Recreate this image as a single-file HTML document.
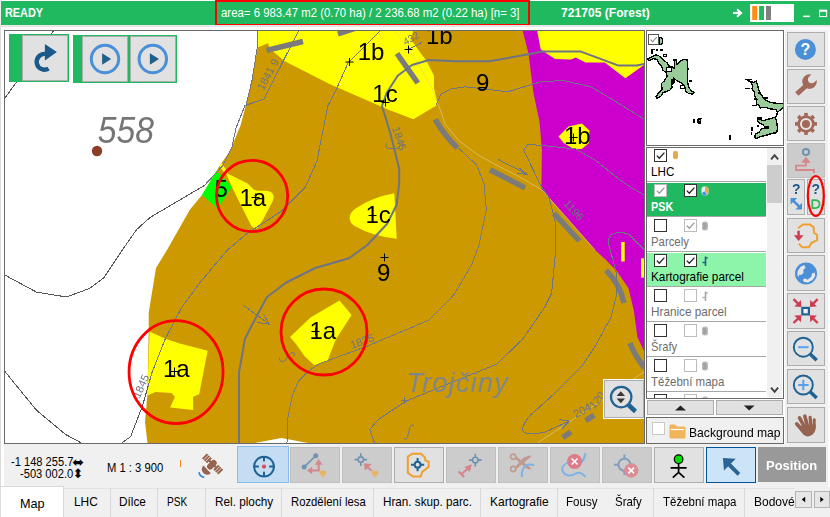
<!DOCTYPE html>
<html><head><meta charset="utf-8"><title>Forest map</title>
<style>
*{box-sizing:border-box;margin:0;padding:0}
html,body{width:830px;height:517px;overflow:hidden;background:#f0f0f0}
body{position:relative;font-family:"Liberation Sans",sans-serif;font-size:13px;color:#000}
.a{position:absolute}
.t{position:absolute;white-space:nowrap;line-height:1;transform-origin:0 0}
#title{left:1px;top:1px;width:829px;height:24px;background:#21b95f}
.w{color:#fff}
.b{font-weight:bold}
.btn{position:absolute;background:#e1e1e1;border:1px solid #adadad}
.btn.dis{background:#cccccc;border-color:#bfbfbf}
.btn.act1{background:#c5ddf2;border-color:#86bcee}
.btn.act2{background:#cce4f7;border:1.5px solid #005499}
.btn svg{position:absolute;left:0;top:0}
.cb{position:absolute;width:13px;height:13px;background:#fff;border:1px solid #333}
.cb.l{border-color:#bcbcbc}
.cb svg{position:absolute;left:0;top:0}
.sep{position:absolute;left:647px;width:119px;height:1px;background:#a0a0a0}
.tab{position:absolute;top:488px;height:29px;border-left:1px solid #d9d9d9}
</style>
<style>
#tready{transform:scaleX(0.9068);margin-left:-0.2px}
#tarea{transform:scaleX(0.9120);margin-left:-0.2px}
#tforest{transform:scaleX(0.9682);margin-left:-0.2px}
#ly0{transform:scaleX(0.8956);margin-left:-0.2px}
#ly1{transform:scaleX(0.8341);margin-left:-0.2px}
#ly2{transform:scaleX(0.8741);margin-left:-0.2px}
#ly3{transform:scaleX(0.9052);margin-left:-0.2px}
#ly4{transform:scaleX(0.9030);margin-left:-0.2px}
#ly5{transform:scaleX(0.8601);margin-left:-0.2px}
#ly6{transform:scaleX(0.8820);margin-left:-0.2px}
#bgmap{transform:scaleX(0.9320);margin-left:-0.2px}
#co1{transform:scaleX(0.8888);margin-left:-0.2px}
#co2{transform:scaleX(0.8899);margin-left:-0.2px}
#scale{transform:scaleX(0.8985);margin-left:-0.2px}
#pos{transform:scaleX(0.9965);margin-left:-0.2px}
#tb0{transform:scaleX(0.9725);margin-left:-0.2px}
#tb1{transform:scaleX(0.9148);margin-left:-0.2px}
#tb2{transform:scaleX(0.9080);margin-left:-0.2px}
#tb3{transform:scaleX(0.7803);margin-left:-0.2px}
#tb4{transform:scaleX(0.9050);margin-left:-0.2px}
#tb5{transform:scaleX(0.8686);margin-left:-0.2px}
#tb6{transform:scaleX(0.8980);margin-left:-0.2px}
#tb7{transform:scaleX(0.9230);margin-left:-0.2px}
#tb8{transform:scaleX(0.8897);margin-left:-0.2px}
#tb9{transform:scaleX(0.8832);margin-left:-0.2px}
#tb10{transform:scaleX(0.8844);margin-left:-0.2px}
#tb11{transform:scaleX(0.9208);margin-left:-0.2px}
</style>
</head><body>
<div class="a" style="left:0;top:0;width:830px;height:1px;background:#fff"></div>
<div id="title" class="a"></div>
<div class="t w b" id="tready" style="left:5px;top:7px;font-size:12px">READY</div>
<div class="t w" id="tarea" style="left:221px;top:7px;font-size:12.5px">area= 6 983.47 m2 (0.70 ha) / 2 236.68 m2 (0.22 ha) [n= 3]</div>
<div class="a" style="left:215px;top:0;width:314.6px;height:25.8px;border:2.8px solid #f00"></div>
<div class="t w b" id="tforest" style="left:561.3px;top:7px;font-size:12.5px">721705 (Forest)</div>
<svg class="a" style="left:728px;top:1px" width="102" height="24" viewBox="728 1 102 24">
<path d="M733,13 H740" stroke="#fff" stroke-width="2.1" fill="none"/><path d="M737,9.3 L741,13 L737,16.7" stroke="#fff" stroke-width="2.1" fill="none"/>
<rect x="750" y="4" width="44" height="18" fill="#fff"/>
<rect x="752.2" y="6" width="4.9" height="14" fill="#ff8c14"/>
<rect x="759.1" y="6" width="4.9" height="14" fill="#21b95f"/>
<rect x="766" y="6" width="5" height="14" fill="#808080"/>
<rect x="803.2" y="15.6" width="6.7" height="1.5" fill="#fff"/>
<rect x="819.6" y="10.6" width="7" height="6" fill="none" stroke="#fff" stroke-width="1"/><rect x="819.1" y="9.6" width="8" height="2.2" fill="#fff"/>
</svg>

<div class="a" style="left:0;top:25px;width:830px;height:1.5px;background:#e8e6e7"></div>
<div class="a" style="left:1px;top:26.5px;width:784px;height:417.5px;background:#fff"></div>
<div class="a" style="left:785px;top:26.5px;width:45px;height:3.5px;background:#fff"></div>
<div class="a" style="left:828px;top:26.5px;width:2px;height:460px;background:#fbfbfb"></div>
<div class="a" style="left:0;top:26.5px;width:1px;height:491px;background:#dcdcdc"></div>
<!-- MAP FRAME -->
<div class="a" style="left:4px;top:30px;width:641px;height:414px;border:1px solid #696969;background:#fff"></div>
<svg class="a" id="map" style="left:5px;top:31px" width="639" height="412" viewBox="5 31 639 412" font-family="Liberation Sans, sans-serif">
<g shape-rendering="auto">
<!-- brown -->
<polygon fill="#cc9900" points="257.3,30 644,30 644,443 308,443 281.4,438 254.8,443 147.5,443 145,422 147.3,396 148.7,332 148.7,312.7 156,268 167,250 190,209.6 202,195 216.5,171 220,165 229.8,151.6 240.7,125 246,104.8 252,80.6 257.5,48"/>
<!-- yellow top-left -->
<polygon fill="#ffff00" points="257.3,30 413.4,30 411,39.5 419.5,51.6 426.7,61.3 434,75.8 434,87.9 437.6,104.8 413.4,119.3 388,109.6 330,84.3 284.8,61.3 270,49 268,43.3 257.5,47.5"/>
<!-- magenta -->
<polygon fill="#cc00cc" points="522.5,30 528.6,54 533.4,92.7 539.5,121.7 541.9,150 541.4,189 595,250 606,260 617.5,272 628.5,288.5 633.8,310.3 637.4,337 644.2,351.4 644.2,30"/>
<!-- yellow top-right -->
<polygon fill="#ffff00" points="537,30 540.7,49.2 545.5,52.8 555.2,58.9 571,59.6 575.8,57.6 585.4,62.5 604.8,62.5 625.3,78.2 644.2,64.9 644.2,30"/>
<!-- yellow 1b blob -->
<polygon fill="#ffff00" points="558.5,136.5 568.5,126.5 581.8,123.5 589.5,130.5 589,143 581.8,149 573.3,148.7 563.7,143"/>
<rect fill="#ffff00" x="621.2" y="242" width="3.5" height="19.5"/>
<rect fill="#ffff00" x="641" y="258.3" width="3.2" height="19.3"/>
<!-- green -->
<polygon fill="#00ff00" points="216.5,171 232.2,186.7 217.7,208.4 202,195"/>
<polygon fill="#ffff00" points="219,165.5 221.5,163 228,172.5 225.5,174.5"/>
<!-- yellow 1a c1 -->
<path fill="#ffff00" d="M225.9,172.7 L247.6,183.5 L253.5,189.2 Q256,190.8 259,190.8 L267,190.8 Q271.5,191.3 273,194.5 Q274.5,197.5 272.5,201.5 L262.7,220.2 L256.4,229 L251.6,226.6 L232,187.2 Z"/>
<!-- yellow 1c mid -->
<path fill="#ffff00" d="M349.6,218 Q350,212 355.6,208.4 Q372.6,197 394.3,193.2 L396.7,238.7 Q372.6,236.5 355.6,226.6 Q349.5,223 349.6,218 Z"/>
<!-- yellow 1a c2 -->
<polygon fill="#ffff00" points="149.6,331.4 165.3,338.7 179.8,343.5 207.6,350.8 199.2,394.3 193.1,396.7 193.1,410 170.1,407.6 175,396.7 171.3,393 155.6,391.9 147.2,395.5"/>
<!-- yellow 1a c3 -->
<polygon fill="#ffff00" points="290,337 310.5,317.5 339.5,300.6 351.6,315 335.9,339.3 327.4,361 314,365 304.4,356 296,344"/>
</g>
<!-- light lines -->
<g fill="none" stroke="#dcc680" stroke-width="0.9" opacity="0.85">
<polyline points="394,30 419,65 432,88 438.4,104.7" opacity="0.5"/><polyline points="438.4,104.7 445.1,124 458.7,140.5 478,155 497.4,165.6 516.7,175.3 541.9,189.8 595,250"/>
<polyline points="537.8,442.8 600,401.7 644,372"/>
</g>
<!-- thick dashes -->
<g fill="none" stroke="#7b7b7b" stroke-width="5.5">
<path d="M266.6,50.3 L303,41.5"/>
<path d="M338,34 L356,28"/>
<path d="M397,53.5 L417.8,83"/>
<path d="M435.2,119.3 Q444,135 457.5,148"/>
<path d="M490,169.7 L525,187.9"/>
<path d="M554,213.3 L579.4,241"/>
<path d="M606,270.4 Q620,284 624,303"/>
<path d="M630,343 Q634,354 644.5,368"/>
<path d="M562.7,437.5 L571,432"/>
<path d="M585.7,420.6 L594,415.1"/>
</g>
<!-- 2px gray lines -->
<g fill="none" stroke="#6e7486" stroke-width="2" stroke-linejoin="round">
<polyline points="644.5,64 636.7,65.6 618.7,65.6 581,51.6 541.9,51.6 529.8,54 489.6,61.3 455.8,61.3 429,60 412,65 397.7,75.8 386.8,92.7 382,106 390.5,133.8 399.2,168.5 399.2,183 396.7,204.8 387,224 367.3,245 349,258.3 315.3,268 286.3,282.5 267,297 250.9,327 245,338.7 239,372.6 239,443"/>
</g>
<!-- thin lines -->
<g fill="none" stroke="#707585" stroke-width="1" shape-rendering="crispEdges">
<polyline points="299,30 264,99 245,105.6 236,128 232,146.8 222.5,166 204.4,185.5 150,217.5 136.6,229.6 125.8,245 104,277.6 89.5,288.5 66.5,297 36.3,292 4.8,275"/>
<polyline points="381,30 348,63 337,87.9 328,105.6 324,125 316.9,161.3 304.8,187.9 281.8,210.9 246.7,233.8 227.4,250 200,282.5 181.4,307.9 165.3,338.7 152,372.6 142.7,405.3 130.6,436.7 122,442.8"/>
<polyline stroke="#7a7a7a" points="458.5,148 476.6,165 483.9,183 486.3,209.6 479,245 471.8,264.3 454.8,293.4 450,299 429,320 366,346.6 320,363.5 308,371.4 298.4,381 292.3,395.6 287.5,419.8 287,442.8"/>
<polyline points="644.2,119.3 608,96.8 591,86.8 563.5,80.5 540.8,81.7 508,91.8 465.4,86.8 451,89 441,94 436.4,104.8"/>
<polyline points="644,195 624,183 595,160 575.8,149 541.9,145.5 527.4,144.3 523.8,150.4 540.7,185.5 549,197.5 555.2,221.7 555.7,250 551.6,293.4 544.3,307.9 522.5,339.3 496.7,364.2 460.5,378.7 404.8,401.7 378,419.8 369.7,429.5 374.5,442.8"/>
<path d="M644.3,250 L628.7,234.2 Q620,231 613,233.8 Q607.3,237 608.4,243.5 L613,260.1 L616.4,274 L616.9,293.4 L610.8,317.5 L595,346.6 L581.4,366.6 L554.8,393.2 L530.6,415 Q521,426 523,431 Q527,436.5 545,432 L569.3,421"/>
<polyline points="559,419.5 569.3,421 562,428.5"/>
<polyline points="4.8,371.4 36.3,410 65.3,434.3 81,442.8"/>
<polyline points="54,30 5,98"/>
<polyline points="408.6,49.3 421.6,42.5"/>
<polyline points="498.3,159.4 527.4,174.5"/>
<polyline points="518.6,167.5 527.4,174.5 516.7,173.3"/>
<polyline points="242.7,304.8 269.3,324.2"/>
<polyline points="263.5,314 269.3,324.2 257.5,322.5"/>
</g>
<g fill="none" stroke="#555" stroke-width="1" shape-rendering="crispEdges">
<polyline points="204.4,185.5 150,217.5 136.6,229.6 125.8,245 104,277.6 89.5,288.5 66.5,297 36.3,292 4.8,275"/>
<polyline points="148,386 142.7,405.3 130.6,436.7 122,442.8"/>
<polyline points="4.8,371.4 36.3,410 65.3,434.3 81,442.8"/>
<polyline points="54,30 5,98"/>
</g>
<g fill="none" stroke="#777" stroke-width="1" shape-rendering="crispEdges"><polyline points="257.8,30 257.5,46 252,80.6 246,104.8"/></g>
<!-- brown dot -->
<circle cx="97" cy="151" r="5.2" fill="#8b3d26"/>
<!-- small rotated labels -->
<g fill="#6e7486" font-size="11">
<text transform="translate(263.5,91) rotate(-62)">1841 9</text>
<text transform="translate(405.5,45.5) rotate(-30)" font-size="10">432</text>
<text transform="translate(392,128) rotate(72)">1845</text>
<text transform="translate(563,204) rotate(48)">1196</text>
<text transform="translate(352,349) rotate(-20)">1835</text>
<text transform="translate(139.5,399) rotate(-66)">1845</text>
<text transform="translate(576,418) rotate(-28)">204</text>
<text transform="translate(594,409.5) rotate(-50)">120</text>

</g>
<path d="M404,438.5 q2,1.8 3.4,-1 l2.6,-10.5 q1.2,-3 4,-1.6" fill="none" stroke="#6d7684" stroke-width="1"/>
<path d="M279.3,358.2 Q279.3,361.5 282.5,361.8 Q285,361.5 287,357.5 L289.5,354.3 Q291.5,351.8 293.8,352.8 Q295.3,354.5 293.7,356.5" fill="none" stroke="#6e7486" stroke-width="1"/>
<path d="M386.6,143.4 Q384.6,147.3 388,148.3 L396,148.7 Q399,148.5 400,146 Q401,143.2 403,144 Q404.2,145.5 402.8,147.2" fill="none" stroke="#6e7486" stroke-width="1"/>
<!-- big gray labels -->
<text transform="translate(97.7,143) scale(0.937,1)" font-size="36" font-style="italic" fill="#757575">558</text>
<text id="troj" x="406.5" y="392" font-size="27" font-style="italic" fill="#7f868e" letter-spacing="1.25">Trojčiny</text>
<!-- plus marks -->
<g stroke="#000" stroke-width="1" fill="none">
<path d="M345.5,62h8M349.5,58v8"/>
<path d="M381.5,102.5h8M385.5,98.5v8"/>
<path d="M404.5,49.5h8M408.5,45.5v8"/>
<path d="M251.5,197.5h8M255.5,193.5v8"/>
<path d="M368.5,215.5h8M372.5,211.5v8"/>
<path d="M380.5,257.5h8M384.5,253.5v8"/>
<path d="M170.5,371.5h8M174.5,367.5v8"/>
<path d="M311.5,331.5h8M315.5,327.5v8"/>
<path d="M569.5,137.5h8M573.5,133.5v8"/>
<path d="M479,87.5h8"/>
</g>
<g stroke="#6d7684" stroke-width="1" fill="none"><path d="M401,400.5h7M404.5,397v7"/></g>
<!-- black labels -->
<g fill="#000" font-size="24">
<text x="357.7" y="60">1b</text>
<text x="426" y="44">1b</text>
<text x="372.3" y="102">1c</text>
<text x="476" y="91">9</text>
<text x="564" y="143.5">1b</text>
<text x="214.5" y="197.3">5</text>
<text x="239.5" y="205.8">1a</text>
<text x="365.5" y="223">1c</text>
<text x="377" y="281.3">9</text>
<text x="163" y="377.4">1a</text>
<text x="309.5" y="338.5">1a</text>
</g>
<!-- red circles -->
<g fill="none" stroke="#ff0000" stroke-width="2.8">
<circle cx="252.1" cy="196" r="35.6"/>
<ellipse cx="176.05" cy="372.1" rx="47" ry="51.4"/>
<circle cx="324" cy="332" r="43"/>
</g>

</svg>
<!-- MAP OVERLAY BUTTONS -->
<div class="a" style="left:9px;top:34px;width:60px;height:48px;background:#21b95f"></div>
<div class="btn" style="left:22px;top:35px;width:46px;height:46px">
<svg width="44" height="44" viewBox="23 36 44 44"><path d="M48.6,68.6 A7.9,7.9 0 1 1 45,53.9" fill="none" stroke="#1a5a8a" stroke-width="4.4"/><polygon points="44.9,44.1 56.9,52 44.9,60.6" fill="#1a5a8a"/></svg></div>
<div class="a" style="left:73px;top:35px;width:104px;height:48px;background:#21b95f"></div>
<div class="btn" style="left:82px;top:36px;width:46px;height:46px">
<svg width="44" height="44" viewBox="83 37 44 44"><circle cx="105" cy="59" r="13.7" fill="none" stroke="#4a90d9" stroke-width="3"/><polygon points="102.1,53.2 111.2,58.9 102.1,64.8" fill="#1f5f8b"/></svg></div>
<div class="btn" style="left:130px;top:36px;width:46px;height:46px">
<svg width="44" height="44" viewBox="131 37 44 44"><circle cx="152.8" cy="59" r="13.7" fill="none" stroke="#4a90d9" stroke-width="3"/><polygon points="149.9,53.2 159,58.9 149.9,64.8" fill="#1f5f8b"/></svg></div>
<div class="a" style="left:603px;top:379px;width:41px;height:40px;background:#fff"></div>
<div class="btn" style="left:604px;top:380px;width:39.5px;height:38px">
<svg width="38" height="36" viewBox="605 381 38 36"><circle cx="621.2" cy="397.1" r="10.2" fill="none" stroke="#1f6394" stroke-width="2.2"/><path d="M628.6,405 L635.5,411.5" stroke="#1f6394" stroke-width="4.5" fill="none"/><polygon points="616.6,395.9 620.8,391.2 625,395.9" fill="#383838"/><polygon points="616.6,398.5 625,398.5 620.8,403.2" fill="#383838"/></svg></div>

<!-- MINIMAP -->
<div class="a" style="left:646px;top:30px;width:138px;height:116px;border:1px solid #696969;background:#fff"></div>
<svg class="a" style="left:647px;top:31px" width="136" height="114" viewBox="647 31 136 114" shape-rendering="crispEdges">
<g fill="#99cc99" stroke="#000" stroke-width="1.3" stroke-linejoin="miter">
<polygon points="647.2,59.3 651.6,56.9 656,54.9 658.8,55.8 661.5,58 664.8,61 667.6,63.2 668.7,65.9 672.6,66.5 673.9,68.7 674.8,65.4 673.9,59.3 675.9,59.3 677,64.3 680.3,61.5 683,59.3 686.9,59.3 687.4,63.2 688,68.7 687.4,74.8 687.4,81.4 688.6,86.9 691.3,90.8 694.1,92.4 692.4,94.1 688.6,93.5 685.8,91.3 685.2,87.4 681.4,83 676.4,80.3 673.9,78.1 671.5,83.6 672,87.4 669.8,90.2 665.9,91.9 662.6,92.4 661.5,95.7 657.1,98.5 656,96.8 658.8,92.4 662.1,89.1 661.5,83.6 664.8,80.3 667.1,75.9 665.9,72.6 662.6,69.8 661.5,65.9 658.8,63.2 657.1,59.3 653.3,58.8 649.4,60.4"/>
<polygon points="659,37.8 661.5,37.6 662.9,40 662.2,43.5 660,45 659,43"/>
<polygon points="745.6,79.1 753.4,82.6 756.2,81.2 757.6,84.7 758.3,88.9 761.1,94.6 764.7,99.5 770.3,102.4 777.4,103.4 783.5,103.8 783.5,107.3 780.2,110.1 777.4,112.3 776,109.4 770.3,109 765.4,107.3 760.4,108 759,105.2 756.2,103.8 756.9,99.5 754.8,96 754.1,91.8 751.9,88.9 752.7,85.4 750.5,81.9"/>
<polygon points="757.6,117.9 763.2,120.7 770.3,118.6 775.3,117.2 776.7,121.4 777.4,128.5 776.7,132.7 771.7,133.4 767.5,134.9 761.8,136.3 756.2,138.4 754.8,136.3 756.2,133.4 759,132.7 761.1,129.2 765.4,127.8 763.2,125 760.4,123.6 757.6,121.4"/>
</g>
<g fill="#fff" stroke="#000" stroke-width="1">
<rect x="666.5" y="67.5" width="5" height="4"/>
<rect x="680.5" y="85.5" width="4" height="3"/>
<rect x="663.5" y="54.5" width="3" height="2"/>
</g>
<g fill="#000">
<rect x="651" y="48.5" width="2" height="5"/><rect x="653" y="48.5" width="2" height="1.5"/><rect x="655.5" y="49" width="2.2" height="1.5"/><rect x="660.4" y="49" width="2.2" height="1.5"/>
<rect x="689" y="80" width="3" height="1.6"/>
<polygon points="671.5,79 674,78 675.5,82 672,85 671,83"/>
<rect x="692.9" y="119" width="2" height="4"/><polygon points="698,118 702,118 701,120 700.5,124 698,124 697,121"/>
<rect x="729" y="135" width="2.2" height="5"/>
<rect x="745" y="87.8" width="5" height="1"/><rect x="752" y="104.8" width="5" height="1.2"/><rect x="763.2" y="96.7" width="4.3" height="2"/><rect x="745.6" y="78.5" width="6" height="1.5"/>
<path d="M777.4,112.3 L776,117.2" stroke="#000" stroke-width="1.5"/>
<rect x="757" y="117" width="4.5" height="3"/><rect x="763.5" y="125.8" width="5.5" height="3"/>
<rect x="750.5" y="127" width="2.2" height="4"/><rect x="750.5" y="132" width="1.5" height="3"/><rect x="757" y="125" width="1.5" height="1.5"/><rect x="753.5" y="136" width="1.5" height="1.5"/>
<rect x="758" y="92" width="1.5" height="1.5"/><rect x="754" y="98" width="1.5" height="1.5"/>
</g>
<rect x="699" y="120" width="1" height="1" fill="#99cc99"/>
</svg>
<div class="a" style="left:648px;top:34px;width:11px;height:11px;background:#fff;border:1px solid #555"><svg class="a" style="left:0;top:0" width="9" height="9" viewBox="0 0 9 9"><path d="M1.5,4.6 L3.6,6.8 L7.8,2" fill="none" stroke="#888" stroke-width="1.1"/></svg></div>

<!-- LAYER LIST -->
<div class="a" style="left:646px;top:147px;width:138px;height:252px;border:1px solid #696969;background:#fff"></div>
<div class="a" id="list" style="left:647px;top:149px;width:136px;height:249px;overflow:hidden">
<div class="cb" style="left:7px;top:0px"><svg width="11" height="11" viewBox="0 0 11 11"><path d="M1.8,5.6 L4.3,8.2 L9.4,2.6" fill="none" stroke="#222" stroke-width="1.3"/></svg></div>
<div class="a" style="left:26px;top:2px;width:5px;height:8px;border-radius:2px;background:#e8a84c"></div>
<div class="t" id="ly0" style="left:4.5px;top:16px;font-size:13px;color:#000">LHC</div>
<div class="a" style="left:0;top:32px;width:119px;height:1px;background:#a6a6a6"></div>
<div class="a" style="left:0;top:34px;width:119px;height:33.4px;background:#21b95f"></div>
<div class="cb l" style="left:7px;top:35px"><svg width="11" height="11" viewBox="0 0 11 11"><path d="M1.8,5.6 L4.3,8.2 L9.4,2.6" fill="none" stroke="#9a9a9a" stroke-width="1.3"/></svg></div>
<div class="cb" style="left:37px;top:35px"><svg width="11" height="11" viewBox="0 0 11 11"><path d="M1.8,5.6 L4.3,8.2 L9.4,2.6" fill="none" stroke="#222" stroke-width="1.3"/></svg></div>
<svg class="a" style="left:54px;top:37px" width="8" height="10" viewBox="0 0 8 10"><rect x="0.5" y="0.5" width="7" height="9" rx="3" fill="#e9f1f6"/><path d="M4,0.5 h0.5 a3,3 0 0 1 3,3 v3 a3,3 0 0 1 -1,2.2 L4,5 Z" fill="#e8a84c"/><path d="M0.8,7 L3.5,5.2 L6,8.6 Q4,10 2,9 Z" fill="#4a90d9"/></svg>
<div class="t b" id="ly1" style="left:4.5px;top:51px;font-size:13px;color:#fff">PSK</div>
<div class="a" style="left:0;top:67px;width:119px;height:1px;background:#a6a6a6"></div>
<div class="cb" style="left:7px;top:70px"></div>
<div class="cb l" style="left:37px;top:70px"><svg width="11" height="11" viewBox="0 0 11 11"><path d="M1.8,5.6 L4.3,8.2 L9.4,2.6" fill="none" stroke="#9a9a9a" stroke-width="1.3"/></svg></div>
<svg class="a" style="left:54px;top:72px" width="8" height="10" viewBox="0 0 8 10"><rect x="1" y="0.5" width="6" height="9" rx="2.5" fill="#b9b9b9"/><path d="M2,3 h3 M2.5,5 h3 M2,7 h3" stroke="#8a8a8a" stroke-width="1"/></svg>
<div class="t" id="ly2" style="left:4.5px;top:86px;font-size:13px;color:#6d6d6d">Parcely</div>
<div class="a" style="left:0;top:102px;width:119px;height:1px;background:#a6a6a6"></div>
<div class="a" style="left:0;top:104px;width:119px;height:33.4px;background:#8df5aa"></div>
<div class="cb" style="left:7px;top:105px"><svg width="11" height="11" viewBox="0 0 11 11"><path d="M1.8,5.6 L4.3,8.2 L9.4,2.6" fill="none" stroke="#222" stroke-width="1.3"/></svg></div>
<div class="cb" style="left:37px;top:105px"><svg width="11" height="11" viewBox="0 0 11 11"><path d="M1.8,5.6 L4.3,8.2 L9.4,2.6" fill="none" stroke="#222" stroke-width="1.3"/></svg></div>
<svg class="a" style="left:54px;top:107px" width="8" height="11" viewBox="0 0 8 11"><path d="M4.5,0.5 v9.5 M4.5,2 h2.2 M1.5,6.5 h3" stroke="#1f5f8b" stroke-width="1.6" fill="none"/></svg>
<div class="t" id="ly3" style="left:4.5px;top:121px;font-size:13px;color:#000">Kartografie parcel</div>
<div class="a" style="left:0;top:137px;width:119px;height:1px;background:#a6a6a6"></div>
<div class="cb" style="left:7px;top:140px"></div>
<div class="cb l" style="left:37px;top:140px"></div>
<svg class="a" style="left:54px;top:142px" width="8" height="11" viewBox="0 0 8 11"><path d="M4.5,0.5 v9.5 M4.5,2 h2.2 M1.5,6.5 h3" stroke="#a9a9a9" stroke-width="1.6" fill="none"/></svg>
<div class="t" id="ly4" style="left:4.5px;top:156px;font-size:13px;color:#6d6d6d">Hranice parcel</div>
<div class="a" style="left:0;top:172px;width:119px;height:1px;background:#a6a6a6"></div>
<div class="cb" style="left:7px;top:175px"></div>
<div class="cb l" style="left:37px;top:175px"></div>
<svg class="a" style="left:54px;top:177px" width="8" height="10" viewBox="0 0 8 10"><rect x="1" y="0.5" width="6" height="9" rx="2.5" fill="#b9b9b9"/><path d="M2,3 h3 M2.5,5 h3 M2,7 h3" stroke="#8a8a8a" stroke-width="1"/></svg>
<div class="t" id="ly5" style="left:4.5px;top:191px;font-size:13px;color:#6d6d6d">Šrafy</div>
<div class="a" style="left:0;top:207px;width:119px;height:1px;background:#a6a6a6"></div>
<div class="cb" style="left:7px;top:210px"></div>
<div class="cb l" style="left:37px;top:210px"></div>
<svg class="a" style="left:54px;top:212px" width="8" height="10" viewBox="0 0 8 10"><rect x="1" y="0.5" width="6" height="9" rx="2.5" fill="#b9b9b9"/><path d="M2,3 h3 M2.5,5 h3 M2,7 h3" stroke="#8a8a8a" stroke-width="1"/></svg>
<div class="t" id="ly6" style="left:4.5px;top:226px;font-size:13px;color:#6d6d6d">Těžební mapa</div>
<div class="a" style="left:0;top:242px;width:119px;height:1px;background:#a6a6a6"></div>
<div class="cb" style="left:7px;top:245px"></div>
<div class="cb l" style="left:37px;top:245px"></div>
<svg class="a" style="left:54px;top:247px" width="8" height="10" viewBox="0 0 8 10"><rect x="1" y="0.5" width="6" height="9" rx="2.5" fill="#b9b9b9"/><path d="M2,3 h3 M2.5,5 h3 M2,7 h3" stroke="#8a8a8a" stroke-width="1"/></svg>
<div class="a" style="left:0;top:277px;width:119px;height:1px;background:#a6a6a6"></div>
<div class="a" style="left:120px;top:0;width:15px;height:247.7px;background:#f0f0f0"></div>
<div class="a" style="left:120px;top:16px;width:15px;height:37.6px;background:#cdcdcd"></div>
<svg class="a" style="left:120px;top:0" width="16" height="249" viewBox="0 0 16 249"><path d="M4.1,10.4 L7.6,6.2 L11.1,10.4" fill="none" stroke="#404040" stroke-width="1.9"/><path d="M4.1,238.6 L7.6,242.8 L11.1,238.6" fill="none" stroke="#404040" stroke-width="1.9"/></svg>
</div>
<div class="btn" style="left:647px;top:400px;width:66.5px;height:15px"><svg width="64" height="12" viewBox="648 401.5 64 12"><polygon points="675,411 680.5,406 686,411" fill="#222"/></svg></div>
<div class="btn" style="left:716px;top:400px;width:66.5px;height:15px"><svg width="64" height="12" viewBox="717 401.5 64 12"><polygon points="743.8,406 754.6,406 749.2,411" fill="#222"/></svg></div>
<div class="a" style="left:646px;top:417px;width:138px;height:27px;border:1px solid #696969;background:#f0f0f0"></div>
<div class="a" style="left:652px;top:422px;width:13px;height:13px;background:#fff;border:1px solid #c8c8c8"></div>
<svg class="a" style="left:669px;top:424px" width="17" height="15" viewBox="0 0 17 15"><path d="M0.5,2 a1.5,1.5 0 0 1 1.5,-1.5 h4 l2,2 h7 a1.5,1.5 0 0 1 1.5,1.5 v9 a1.5,1.5 0 0 1 -1.5,1.5 h-13 a1.5,1.5 0 0 1 -1.5,-1.5 Z" fill="#f0b45a"/><path d="M2,5.5 h13" stroke="#fff" stroke-width="1.2"/></svg>
<div class="t" id="bgmap" style="left:689px;top:425.5px;font-size:13px;color:#000">Background map</div>
<div class="a" style="left:767px;top:148px;width:15px;height:1px;background:#f0f0f0"></div>

<!-- RIGHT BUTTONS -->
<div class="btn" style="left:787px;top:32px;width:38px;height:34.5px"><svg width="36" height="32.5" viewBox="788 33 36 32.5"><circle cx="805.4" cy="49.4" r="10.5" fill="#4a90d9"/><text x="805.4" y="55.2" text-anchor="middle" font-family="Liberation Sans, sans-serif" font-weight="bold" font-size="16" fill="#fff">?</text></svg></div>
<div class="btn" style="left:787px;top:69px;width:38px;height:34.6px"><svg width="36" height="32.6" viewBox="788 70 36 32.6"><path d="M796.8,94 L808.5,83.5" stroke="#a0695a" stroke-width="5" fill="none"/><circle cx="809.5" cy="81.6" r="7.3" fill="#a0695a"/><circle cx="811.6" cy="79.6" r="3.7" fill="#e1e1e1"/><polygon points="809.4,76.6 814.5,71 820,77 814.6,82" fill="#e1e1e1"/></svg></div>
<div class="btn" style="left:787px;top:106px;width:38px;height:34.6px"><svg width="36" height="32.6" viewBox="788 107 36 32.6"><g fill="#a0695a"><rect x="804.2" y="112.9" width="3.6" height="5" transform="rotate(0 806 123.9)"/><rect x="804.2" y="112.9" width="3.6" height="5" transform="rotate(45 806 123.9)"/><rect x="804.2" y="112.9" width="3.6" height="5" transform="rotate(90 806 123.9)"/><rect x="804.2" y="112.9" width="3.6" height="5" transform="rotate(135 806 123.9)"/><rect x="804.2" y="112.9" width="3.6" height="5" transform="rotate(180 806 123.9)"/><rect x="804.2" y="112.9" width="3.6" height="5" transform="rotate(225 806 123.9)"/><rect x="804.2" y="112.9" width="3.6" height="5" transform="rotate(270 806 123.9)"/><rect x="804.2" y="112.9" width="3.6" height="5" transform="rotate(315 806 123.9)"/><circle cx="806" cy="123.9" r="8.6"/></g><circle cx="806" cy="123.9" r="5" fill="none" stroke="#e8e4e2" stroke-width="2"/></svg></div>
<div class="btn dis" style="left:787px;top:143px;width:38px;height:34.5px"><svg width="36" height="32.5" viewBox="788 144 36 32.5"><circle cx="806" cy="152" r="3.1" fill="none" stroke="#6f93b0" stroke-width="2"/><polygon points="801.2,162.7 806,156.8 810.7,162.7" fill="#d4878c"/><path d="M806,162 V165.6 H796 V170 H814 V173" fill="none" stroke="#d4878c" stroke-width="1.8"/></svg></div>
<div class="btn" style="left:787px;top:179px;width:18px;height:35.5px"><svg width="16" height="33" viewBox="788 180.5 16 33"><text x="796.3" y="194.8" text-anchor="middle" font-family="Liberation Sans, sans-serif" font-weight="bold" font-size="14" fill="#1f5a8a">?</text><g fill="#4a90d9"><polygon points="790.6,198.4 797.2,198.4 790.6,205"/><polygon points="802,209.9 795.4,209.9 802,203.3"/><path d="M793,200.8 L799.7,207.5" stroke="#4a90d9" stroke-width="2.6"/></g></svg></div>
<div class="btn" style="left:807px;top:179px;width:18px;height:35.5px"><svg width="16" height="33" viewBox="808 180.5 16 33"><text x="815.7" y="194.8" text-anchor="middle" font-family="Liberation Sans, sans-serif" font-weight="bold" font-size="14" fill="#1f5a8a">?</text><path d="M812.3,200.6 V208.6 H815 Q819.6,208.6 819.6,204.6 Q819.6,200.6 815,200.6 Z" fill="none" stroke="#2bb650" stroke-width="1.7" stroke-linejoin="round"/></svg></div>
<div class="btn" style="left:787px;top:217.5px;width:38px;height:35px"><svg width="36" height="33" viewBox="788 218.5 36 33"><path d="M798.1,227.8 L802.8,223.9 H809.7 L813.6,226.6 L814,232.4 L817.1,234.3 V239.7 L811.3,242.5 L809,246.7 H802 L798.9,243.2" fill="none" stroke="#f0a030" stroke-width="2" stroke-linejoin="round"/><rect x="797.3" y="230.3" width="2.5" height="5" fill="#cc3d50"/><polygon points="793.9,234.7 803.6,234.7 798.6,240.6" fill="#cc3d50"/></svg></div>
<div class="btn" style="left:787px;top:255.3px;width:38px;height:35.4px"><svg width="36" height="33.4" viewBox="788 256.3 36 33.4"><circle cx="806" cy="273.9" r="11" fill="#4a90d9"/><path d="M797.6,271.6 L800.5,267 L804.3,265.4 L805.5,268 L803.2,270.4 L803.6,273.1 L801.6,275 H799 L798.5,277.7 L797.4,275.4 Z" fill="#e6e6e6"/><path d="M802.8,280 L805.1,278.5 L807.4,280 L811.3,277 L812,273.9 L814.7,272.7 L815.2,276.2 L812.8,280 L808.2,282.8 L804,282.4 Z" fill="#e6e6e6"/></svg></div>
<div class="btn" style="left:787px;top:293.3px;width:38px;height:35.4px"><svg width="36" height="33.4" viewBox="788 294.3 36 33.4"><g fill="#cc3d50"><polygon points="801,300.2 801.3,307.2 794.3,306.9"/><path d="M793.5,299.5 L798.6,304.4" stroke="#cc3d50" stroke-width="2.4"/><polygon points="810.2,300.2 809.9,307.2 816.9,306.9"/><path d="M817.7,299.5 L812.6,304.4" stroke="#cc3d50" stroke-width="2.4"/><polygon points="801,322.6 801.3,315.6 794.3,315.9"/><path d="M793.5,323.3 L798.6,318.4" stroke="#cc3d50" stroke-width="2.4"/><polygon points="810.2,322.6 809.9,315.6 816.9,315.9"/><path d="M817.7,323.3 L812.6,318.4" stroke="#cc3d50" stroke-width="2.4"/></g><rect x="802.3" y="308.2" width="6.6" height="6.5" fill="#eee" stroke="#1f6394" stroke-width="2.2"/></svg></div>
<div class="btn" style="left:787px;top:331.1px;width:38px;height:35.4px"><svg width="36" height="33.4" viewBox="788 332.1 36 33.4"><circle cx="803.3" cy="347.3" r="9.5" fill="none" stroke="#1f6394" stroke-width="1.9"/><path d="M810.1,354.1 L816.7,360.3" stroke="#1f6394" stroke-width="3.6"/><rect x="798.1" y="346.3" width="10.5" height="2" fill="#5aa0ee"/></svg></div>
<div class="btn" style="left:787px;top:369.4px;width:38px;height:35px"><svg width="36" height="33" viewBox="788 370.4 36 33"><circle cx="803.3" cy="385.4" r="9.5" fill="none" stroke="#1f6394" stroke-width="1.9"/><path d="M810.1,392.2 L816.7,398.4" stroke="#1f6394" stroke-width="3.6"/><rect x="798.1" y="384.4" width="10.5" height="2" fill="#5aa0ee"/><rect x="802.3" y="380.2" width="2" height="10.5" fill="#5aa0ee"/></svg></div>
<div class="btn" style="left:787px;top:407.2px;width:38px;height:35.4px"><svg width="36" height="33.4" viewBox="788 408.2 36 33.4"><g stroke="#96634f" stroke-linecap="round" fill="none"><path d="M796.8,424.2 L803,431" stroke-width="3.8"/><path d="M799.5,418 L804.5,427" stroke-width="3.6"/><path d="M804.8,416.4 L807.4,426" stroke-width="3.6"/><path d="M810.1,417.6 L810.9,426" stroke-width="3.2"/><path d="M814.3,420 L814,428" stroke-width="3"/></g><path d="M800.5,426 L815.7,424.5 Q816.5,431 813,434.5 Q808,438.5 803.5,435 Q800,431.5 798.5,428 Z" fill="#96634f"/></svg></div>
<svg class="a" style="left:800px;top:170px" width="30" height="52" viewBox="800 170 30 52"><ellipse cx="815.8" cy="196" rx="8" ry="20" fill="none" stroke="#f00" stroke-width="2.2"/></svg>

<!-- BOTTOM TOOLBAR -->
<div class="t" id="co1" style="left:11px;top:455.5px;font-size:12.5px">-1 148 255.7</div>
<div class="t" id="co2" style="left:20px;top:467.5px;font-size:12.5px">-503 002.0</div>
<div class="t" id="ar1" style="left:72.3px;top:454.6px;font-size:14px;font-family:'DejaVu Sans',sans-serif">⬌</div><div class="t" id="ar2" style="left:72.6px;top:467px;font-size:13px;font-family:'DejaVu Sans',sans-serif">⬍</div>
<div class="t" id="scale" style="left:106.8px;top:461.5px;font-size:12.5px">M 1 : 3 900</div>
<div class="a" style="left:180px;top:460.3px;width:1.2px;height:6.6px;background:#e8901a"></div>
<svg class="a" style="left:196px;top:450px" width="30" height="30" viewBox="196 450 30 30"><g transform="rotate(45 212.6 464)"><rect x="201" y="460.6" width="7.2" height="6.8" fill="#96634f"/><rect x="217" y="460.6" width="7.2" height="6.8" fill="#96634f"/><path d="M203.4,460.6v6.8M205.8,460.6v6.8M219.4,460.6v6.8M221.8,460.6v6.8" stroke="#f0f0f0" stroke-width="0.8"/><rect x="208" y="462.8" width="9.2" height="2.4" fill="#96634f"/><rect x="209.6" y="459.5" width="6" height="11" rx="2.8" fill="#96634f"/></g><path d="M203.4,465.6 L210.8,473.2 A5.3,5.3 0 0 1 203.4,465.6 Z" fill="#96634f"/><path d="M199,472.2 A6,6 0 0 0 204.3,477.3" fill="none" stroke="#3a86d9" stroke-width="1.7"/></svg>
<div class="btn act1" style="left:237px;top:446.3px;width:52px;height:36.7px"><svg width="50" height="34.7" viewBox="238 447.3 50 34.7"><circle cx="264" cy="466.9" r="9.9" fill="none" stroke="#1f6394" stroke-width="2"/><path d="M264,456.4V461.7M264,472.1V477.4M253.5,466.9H258.8M269.2,466.9H274.5" stroke="#1f6394" stroke-width="2" fill="none"/><circle cx="264" cy="466.9" r="2.1" fill="#e0495a"/></svg></div>
<div class="btn dis" style="left:290.3px;top:447px;width:49.4px;height:35.5px"><svg width="47.4" height="33.5" viewBox="291.3 448 47.4 33.5"><path d="M304.5,466.9 L316.1,455.7" stroke="#6f93b0" stroke-width="1.6"/><circle cx="304.5" cy="466.9" r="2.5" fill="#6f93b0"/><circle cx="316.1" cy="455.7" r="2.5" fill="#6f93b0"/><g fill="#d4878c"><polygon points="315.2,464.7 319,458.9 322.8,464.7"/><polygon points="312.5,466.7 307.2,470.5 312.5,474.3"/></g><path d="M319,464 V470.5 H312" fill="none" stroke="#d4878c" stroke-width="2"/><polygon points="320.9,470.5 325.7,470.5 326.9,473.1 323.3,477.7 319.7,473.1" fill="#e8b564"/></svg></div>
<div class="btn dis" style="left:342.1px;top:447px;width:49.6px;height:35.5px"><svg width="47.6" height="33.5" viewBox="343.1 448 47.6 33.5"><circle cx="360.9" cy="459.6" r="2.7" fill="none" stroke="#6f93b0" stroke-width="1.6"/><path d="M360.9,453.3V456.9M360.9,462.3V465.9M354.6,459.6H358.2M363.6,459.6H367.2" stroke="#6f93b0" stroke-width="1.6" fill="none"/><polygon points="363.8,463.2 371.9,464 365.2,470.7" fill="#d4878c"/><path d="M367.5,467 L371.7,470.8" stroke="#d4878c" stroke-width="2.2"/><polygon points="372.7,470.5 377.5,470.5 378.7,473.1 375.1,477.7 371.5,473.1" fill="#e8b564"/></svg></div>
<div class="btn" style="left:394.3px;top:447px;width:49.5px;height:35.5px"><svg width="47.5" height="33.5" viewBox="395.3 448 47.5 33.5"><path d="M408.1,456.7 L412.4,453.8 H421.1 L425.4,457.5 V460.4 L429,461.8 V466.9 L422.5,471.9 L421.1,476.5 H413.1 L408.1,472.6 Z" fill="none" stroke="#f0a030" stroke-width="2" stroke-linejoin="round"/><circle cx="417.9" cy="464.7" r="2.9" fill="none" stroke="#1f6394" stroke-width="2"/><path d="M417.9,458.1V461.8M417.9,467.6V471.3M411.3,464.7H415M420.8,464.7H424.5" stroke="#1f6394" stroke-width="2" fill="none"/></svg></div>
<div class="btn dis" style="left:446.4px;top:447px;width:49.2px;height:35.5px"><svg width="47.2" height="33.5" viewBox="447.4 448 47.2 33.5"><circle cx="475.7" cy="460.1" r="2.8" fill="none" stroke="#6f93b0" stroke-width="1.6"/><path d="M475.7,453.7V457.3M475.7,462.9V466.5M469.3,460.1H472.9M478.5,460.1H482.1" stroke="#6f93b0" stroke-width="1.6" fill="none"/><polygon points="464.7,467 472.3,464.2 470.2,472" fill="#d4878c"/><path d="M468,469 L461.6,474.2 M459.1,471.6 L464.5,477" stroke="#d4878c" stroke-width="2.1" fill="none"/></svg></div>
<div class="btn dis" style="left:498.3px;top:447px;width:49.5px;height:35.5px"><svg width="47.5" height="33.5" viewBox="499.3 448 47.5 33.5"><g fill="none" stroke="#c09a8e" stroke-width="1.6"><circle cx="513.5" cy="456.7" r="2.6"/><circle cx="513.5" cy="469" r="2.6"/></g><g fill="#c09a8e"><polygon points="515.2,458.6 516.8,456.8 531.5,468.3 530.3,469.8 526,468"/><polygon points="515.2,467.2 516.8,469 531.5,456.6 530.3,455.2 524,457.6"/></g><path d="M534.5,465.4 Q527.3,462.5 523.8,468 Q521.5,472 522.2,477" fill="none" stroke="#7fb2e5" stroke-width="2"/></svg></div>
<div class="btn dis" style="left:550.4px;top:447px;width:49.2px;height:35.5px"><svg width="47.2" height="33.5" viewBox="551.4 448 47.2 33.5"><path d="M585.8,453.1 Q585.5,458 582,462 M568,462.5 Q562,466 562.7,469.5 Q563.5,474.5 569,475.5 Q573,475.8 577.5,473 Q581.5,471.5 585.8,477" fill="none" stroke="#7fb2e5" stroke-width="2"/><circle cx="575" cy="461.5" r="7.5" fill="#dc7c88"/><path d="M572,458.5 l6,6 M578,458.5 l-6,6" stroke="#fff" stroke-width="1.6"/></svg></div>
<div class="btn dis" style="left:602.3px;top:447px;width:49.5px;height:35.5px"><svg width="47.5" height="33.5" viewBox="603.3 448 47.5 33.5"><circle cx="624.7" cy="464.7" r="6" fill="none" stroke="#7f9fbb" stroke-width="2"/><path d="M624.7,454.5 V459 M614.2,464.7 H618.7 M624.7,470.5 V475 M630.7,464.7 H635" stroke="#7f9fbb" stroke-width="2"/><circle cx="631.5" cy="470.5" r="7.2" fill="#dc8c94"/><path d="M628.6,467.6 l5.8,5.8 M634.4,467.6 l-5.8,5.8" stroke="#fff" stroke-width="1.6"/></svg></div>
<div class="btn" style="left:654.4px;top:447px;width:49.2px;height:35.5px"><svg width="47.2" height="33.5" viewBox="655.4 448 47.2 33.5"><g stroke="#000" fill="none"><path d="M679,463.3 V472.6 M671,467.9 H687 M679,472.4 L673.2,477.7 M679,472.4 L684.8,477.7" stroke-width="1.7"/><circle cx="679" cy="459.2" r="4.3" fill="#00e000" stroke-width="1.2"/></g></svg></div>
<div class="btn act2" style="left:706.3px;top:446.9px;width:49.7px;height:36.1px"><svg width="47.7" height="34.1" viewBox="707.3 447.9 47.7 34.1"><polygon points="723.2,457.9 736,458.7 724.3,470.4" fill="#2a6496"/><path d="M729.5,464.6 L739.2,474.3" stroke="#2a6496" stroke-width="4"/></svg></div>
<div class="a" style="left:758.3px;top:447.4px;width:67.8px;height:35.1px;background:#999"></div>
<div class="t w b" id="pos" style="left:766.6px;top:458.5px;font-size:13px">Position</div>

<!-- TABS -->
<div class="a" style="left:1px;top:444px;width:3px;height:43px;background:#fff"></div>
<div class="a" style="left:1px;top:486.2px;width:63px;height:1px;background:#d9d9d9"></div>
<div class="a" style="left:64px;top:487.6px;width:731px;height:1px;background:#e2e2e2"></div>
<div class="a" style="left:1px;top:487.2px;width:62.3px;height:30px;background:#fff"></div>
<div class="a" style="left:62.8px;top:487px;width:1px;height:30px;background:#d9d9d9"></div>
<div class="a" style="left:109.5px;top:488px;width:1px;height:29px;background:#d9d9d9"></div>
<div class="a" style="left:157.4px;top:488px;width:1px;height:29px;background:#d9d9d9"></div>
<div class="a" style="left:205.3px;top:488px;width:1px;height:29px;background:#d9d9d9"></div>
<div class="a" style="left:281px;top:488px;width:1px;height:29px;background:#d9d9d9"></div>
<div class="a" style="left:373px;top:488px;width:1px;height:29px;background:#d9d9d9"></div>
<div class="a" style="left:480.2px;top:488px;width:1px;height:29px;background:#d9d9d9"></div>
<div class="a" style="left:556.6px;top:488px;width:1px;height:29px;background:#d9d9d9"></div>
<div class="a" style="left:652.6px;top:488px;width:1px;height:29px;background:#d9d9d9"></div>
<div class="a" style="left:744px;top:488px;width:1px;height:29px;background:#d9d9d9"></div>
<div class="t" id="tb0" style="left:20.6px;top:497px;font-size:13px">Map</div>
<div class="t" id="tb1" style="left:74.2px;top:495px;font-size:13px">LHC</div>
<div class="t" id="tb2" style="left:119px;top:495px;font-size:13px">Dílce</div>
<div class="t" id="tb3" style="left:167.4px;top:495px;font-size:13px">PSK</div>
<div class="t" id="tb4" style="left:215.5px;top:495px;font-size:13px">Rel. plochy</div>
<div class="t" id="tb5" style="left:291px;top:495px;font-size:13px">Rozdělení lesa</div>
<div class="t" id="tb6" style="left:383.5px;top:495px;font-size:13px">Hran. skup. parc.</div>
<div class="t" id="tb7" style="left:490.2px;top:495px;font-size:13px">Kartografie</div>
<div class="t" id="tb8" style="left:566.2px;top:495px;font-size:13px">Fousy</div>
<div class="t" id="tb9" style="left:615.2px;top:495px;font-size:13px">Šrafy</div>
<div class="t" id="tb10" style="left:663.2px;top:495px;font-size:13px">Těžební mapa</div>
<div class="t" id="tb11" style="left:754.3px;top:495px;font-size:13px">Bodové</div>
<div class="a" style="left:794.5px;top:488px;width:36px;height:29px;background:#f0f0f0"></div>
<div class="btn" style="left:795.3px;top:491.4px;width:16.9px;height:17px;background:#e6e6e6;border-color:#b4b4b4"></div>
<div class="btn" style="left:813.7px;top:491.4px;width:16.5px;height:17px;background:#e6e6e6;border-color:#b4b4b4"></div>
<svg class="a" style="left:795px;top:489px" width="35" height="22" viewBox="795 489 35 22"><polygon points="805.2,496.7 805.2,502.3 801.8,499.5" fill="#000"/><polygon points="820.3,496.7 820.3,502.3 823.7,499.5" fill="#000"/></svg>

</body></html>
